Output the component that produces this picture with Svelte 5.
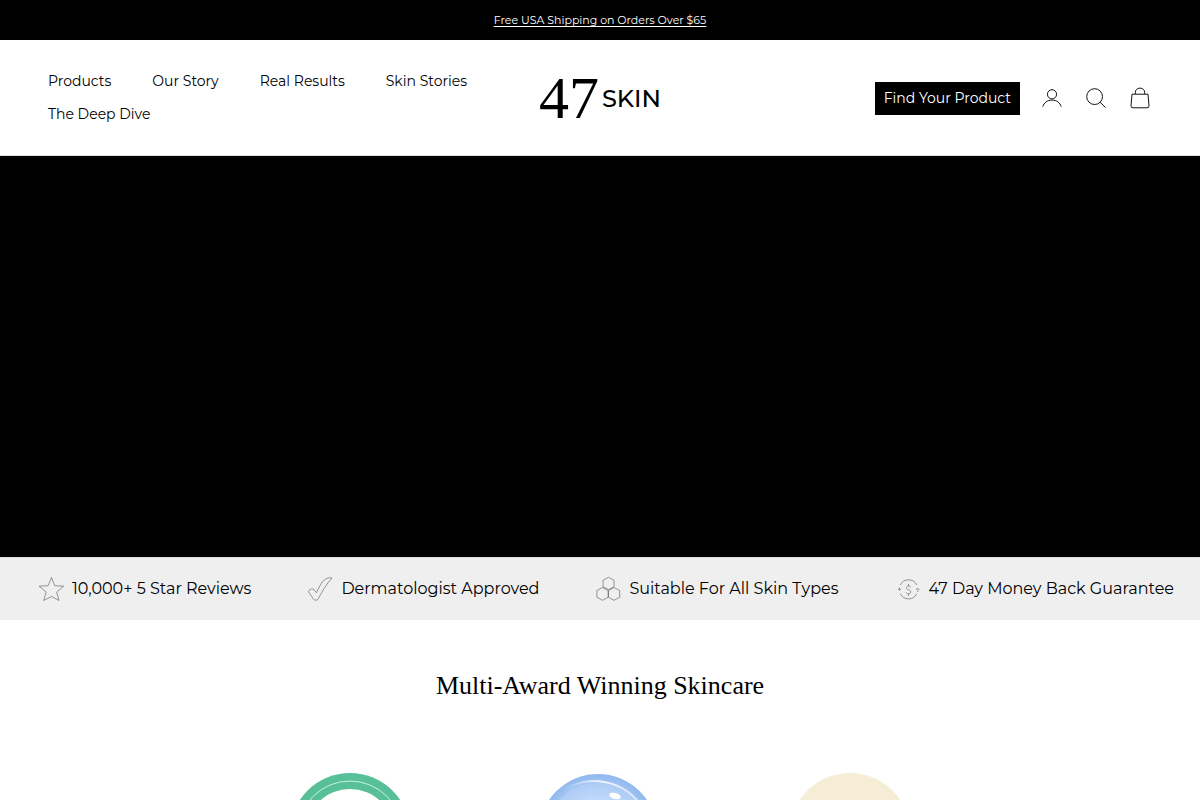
<script>
	const links = ['Products', 'Our Story', 'Real Results', 'Skin Stories', 'The Deep Dive'];

	const features = [
		{ icon: 'star', text: '10,000+ 5 Star Reviews' },
		{ icon: 'tick', text: 'Dermatologist Approved' },
		{ icon: 'cells', text: 'Suitable For All Skin Types' },
		{ icon: 'money', text: '47 Day Money Back Guarantee' }
	];
</script>

<div class="announcement">
	<a href="#shipping">Free USA Shipping on Orders Over $65</a>
</div>

<header>
	<nav aria-label="Main">
		{#each links as link}
			<a href="#shop">{link}</a>
		{/each}
	</nav>

	<a class="logo" href="#home">
		<span class="number">47</span>
		<span class="word">SKIN</span>
	</a>

	<div class="actions">
		<a class="finder" href="#finder">Find Your Product</a>
		<button aria-label="Account">
			<svg viewBox="0 0 24 24">
				<circle cx="12" cy="8.3" r="4.6" />
				<path d="M2.8 20.7c1.3-4.2 4.6-6.6 9.2-6.6s7.9 2.4 9.2 6.6" />
			</svg>
		</button>
		<button aria-label="Search">
			<svg viewBox="0 0 24 24">
				<circle cx="10.6" cy="10.6" r="7.9" />
				<path d="M16 16.2l5.5 5.3" />
			</svg>
		</button>
		<button aria-label="Cart">
			<svg viewBox="0 0 24 24">
				<path d="M4 8.2h16l1 11.6q.1 2-2 2H5q-2.1 0-2-2zM7.3 8V6.6c0-2.6 2-4.5 4.7-4.5s4.700 1.900 4.700 4.500V8" />
			</svg>
		</button>
	</div>
</header>

<section class="hero" aria-label="Video"></section>

<ul class="features">
	{#each features as feature}
		<li>
			<svg viewBox="0 0 26 26" aria-hidden="true">
				{#if feature.icon === 'star'}
					<path d="M13.5 1.500l3.200 8.200 9 .5-7 5.800 2.300 8.500-7.500-4-7.700 4 2.300-8.500-7-5.800 9-.5z" />
				{:else if feature.icon === 'tick'}
					<path d="M25 2c-3-1-7 .8-9 3.200-3 3.500-4.800 8-6.500 11.500L6.200 13c-1.800-.6-4.500 1-4.700 2.700l5.200 7.700c1 1.200 3.400 1 4.300-.2C15 15.800 19 8.500 25 2z" />
				{:else if feature.icon === 'cells'}
					<path d="M13.500 1.300l5.500 3v6.400l-5.500 3-5.500-3V4.300zM7.500 11.500l5.600 3v6.800l-5.600 3-5.600-3v-6.800zM19.100 11.500l5.600 3v6.800l-5.600 3-5.600-3v-6.800z" />
				{:else}
					<path d="M5.400 9a9 9 0 0 1 16.300 0M23 13.500a9 9 0 0 1-.4 2.500M21.700 17.700a9 9 0 0 1-16.300 0M4.500 11.500l-.1 2.500M3 12.800l1.500 1.500 1.700-1.500M21 13.800l1.800-1.600 1.500 1.600" />
					<path d="M15.600 11.400c-.4-1-1.200-1.400-2.100-1.400-2.700 0-2.900 3.300 0 3.800 3 .5 2.800 4 0 4-1.300 0-2.100-.6-2.400-1.600M13.500 8v2M13.500 17.800v2" />
				{/if}
			</svg>
			{feature.text}
		</li>
	{/each}
</ul>

<section class="awards">
	<h2>Multi-Award Winning Skincare</h2>
	<div class="badges">
		<svg viewBox="0 0 120 120" role="img" aria-label="Award">
			<circle cx="60" cy="60" r="60" fill="#58c098" />
			<circle cx="60" cy="60" r="52" fill="none" stroke="#c4f4df" />
			<circle cx="60" cy="60" r="44" fill="#fff" />
		</svg>
		<svg viewBox="0 0 120 120" role="img" aria-label="Award">
			<defs>
				<radialGradient id="glass" cx="50%" cy="50%" r="50%">
					<stop offset="0.5" stop-color="#c4dbfa" />
					<stop offset="0.84" stop-color="#aeccf6" />
					<stop offset="0.9" stop-color="#9cc0f1" />
					<stop offset="1" stop-color="#91b9ee" />
				</radialGradient>
				<linearGradient id="shine">
					<stop offset="0" stop-color="#fff" stop-opacity="0" />
					<stop offset="0.5" stop-color="#eff6ff" />
					<stop offset="1" stop-color="#d4e5ff" />
				</linearGradient>
			</defs>
			<circle cx="58" cy="60" r="59" fill="url(#glass)" />
			<path d="M24 17c24-15 59-12 79 18" fill="none" stroke="url(#shine)" stroke-width="2" />
			<ellipse cx="75" cy="23" rx="6" ry="3" fill="#fff" transform="rotate(15 75 23)" />
		</svg>
		<svg viewBox="0 0 120 120" role="img" aria-label="Award">
			<circle cx="60" cy="60" r="60" fill="#f6edd6" />
		</svg>
	</div>
</section>

<style>
	:global(body) {
		background: #fff;
		color: #000;
		font-family: Montserrat, Inter, 'Liberation Sans', sans-serif;
		font-size: 14px;
	}

	a {
		color: inherit;
		text-decoration: none;
	}

	.announcement {
		display: flex;
		align-items: center;
		justify-content: center;
		height: 40px;
		background: #000;
		color: #fff;
		font-size: 11px;
	}

	.announcement a {
		text-decoration: underline;
		text-underline-offset: 2px;
	}

	header {
		display: grid;
		grid-template-columns: 1fr auto 1fr;
		align-items: center;
		padding: 25px 48px 24px;
		border-bottom: 1px solid #ddd;
	}

	nav {
		display: flex;
		flex-wrap: wrap;
		column-gap: 41px;
		line-height: 33px;
	}

	.logo {
		display: flex;
		align-items: center;
		gap: 3px;
	}

	.number {
		font-family: 'Liberation Serif', serif;
		font-size: 60px;
		line-height: 66px;
	}

	.word {
		font-size: 24px;
		font-weight: 500;
	}

	.actions {
		display: flex;
		align-items: center;
		justify-content: flex-end;
		gap: 20px;
	}

	.finder {
		padding: 0 9px;
		background: #000;
		color: #fff;
		line-height: 33px;
		white-space: nowrap;
	}

	button {
		padding: 0;
		border: 0;
		background: none;
		cursor: pointer;
	}

	button svg {
		display: block;
		width: 24px;
		height: 24px;
		fill: none;
		stroke: #111;
	}

	.hero {
		height: 401px;
		background: #000;
	}

	.features {
		display: flex;
		justify-content: space-between;
		margin: 0;
		padding: 0 26px 0 38px;
		border-top: 1px solid #ddd;
		background: #efefef;
		list-style: none;
		font-size: 16px;
		line-height: 62px;
		white-space: nowrap;
	}

	.features li {
		display: flex;
		align-items: center;
		gap: 8px;
	}

	.features svg {
		width: 26px;
		height: 26px;
		fill: none;
		stroke: #555;
		stroke-width: 0.6;
	}

	.awards {
		padding: 48px 24px;
	}

	h2 {
		margin: 0;
		font-family: 'Liberation Serif', serif;
		font-size: 26px;
		font-weight: 400;
		line-height: 36px;
		text-align: center;
	}

	.badges {
		display: grid;
		grid-template-columns: repeat(3, 1fr);
		justify-items: center;
		max-width: 750px;
		margin: 69px auto 0;
	}

	.badges svg {
		width: 120px;
		height: 120px;
	}
</style>
